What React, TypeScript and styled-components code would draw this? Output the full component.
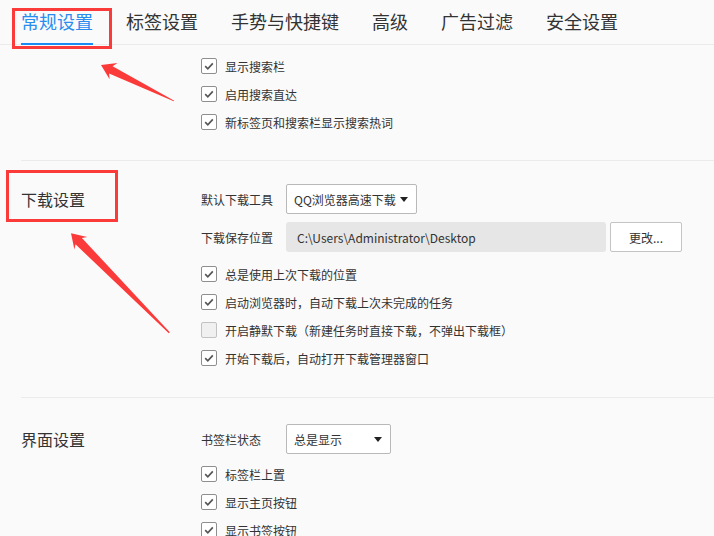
import React from 'react';
import styled, {createGlobalStyle} from 'styled-components';

const GlobalStyle = createGlobalStyle`
  html, body {
    margin: 0;
    padding: 0;
    background: #fafafa;
  }
  body {
    font-family: "Noto Sans CJK SC", "Noto Sans", sans-serif;
    color: #333;
  }
`;

const Page = styled.div`
  position: relative;
  width: 714px;
  height: 536px;
  overflow: hidden;
  background: #fafafa;
`;

const TabBar = styled.div`
  display: flex;
  gap: 33px;
  height: 44px;
  padding-left: 21px;
  border-bottom: 1px solid #ebebeb;
`;

const Tab = styled.div<{ $active?: boolean }>`
  position: relative;
  font-size: 18px;
  line-height: 43px;
  color: ${p => (p.$active ? '#2b8cf0' : '#333')};
  &::after {
    content: '';
    display: ${p => (p.$active ? 'block' : 'none')};
    position: absolute;
    left: 0;
    right: 0;
    bottom: -1px;
    height: 2px;
    background: #1a8bf5;
  }
`;

const Section = styled.section<{ $top: number; $bottom: number; $line?: boolean }>`
  display: flex;
  margin-left: 21px;
  padding-top: ${p => p.$top}px;
  padding-bottom: ${p => p.$bottom}px;
  border-top: ${p => (p.$line ? '1px solid #ebebeb' : 'none')};
`;

const Title = styled.div`
  width: 180px;
  flex: none;
  font-size: 16px;
  line-height: 30px;
  color: #333;
`;

const Body = styled.div`
  display: flex;
  flex-direction: column;
`;

const FieldRow = styled.div<{ $gap?: number }>`
  display: flex;
  align-items: center;
  height: 30px;
  margin-top: ${p => p.$gap ?? 0}px;
`;

const Label = styled.span`
  width: 85px;
  flex: none;
  font-size: 12px;
  color: #333;
`;

const Select = styled.div<{ $width: number }>`
  box-sizing: border-box;
  display: flex;
  align-items: center;
  justify-content: space-between;
  width: ${p => p.$width}px;
  height: 30px;
  padding: 0 8px 0 7px;
  background: #fff;
  border: 1px solid #b9b9b9;
  border-radius: 2px;
  font-size: 12px;
  color: #333;
`;

const Caret = styled.span`
  width: 0;
  height: 0;
  border-left: 4.5px solid transparent;
  border-right: 4.5px solid transparent;
  border-top: 5px solid #222;
`;

const PathField = styled.div`
  box-sizing: border-box;
  display: flex;
  align-items: center;
  width: 320px;
  height: 30px;
  padding-left: 11px;
  background: #e6e6e6;
  border-radius: 3px;
  font-size: 12px;
  color: #333;
`;

const Button = styled.button`
  box-sizing: border-box;
  width: 72px;
  height: 30px;
  margin-left: 4px;
  background: #fff;
  border: 1px solid #c4c4c4;
  border-radius: 2px;
  font-family: inherit;
  font-size: 12px;
  color: #333;
  padding: 0;
`;

const CheckList = styled.div<{ $gap: number }>`
  display: flex;
  flex-direction: column;
  margin-top: ${p => p.$gap}px;
`;

const CheckRow = styled.label`
  display: flex;
  align-items: center;
  gap: 8px;
  height: 28px;
  font-size: 12px;
  color: #333;
`;

const Box = styled.span<{ $on: boolean }>`
  box-sizing: border-box;
  display: flex;
  align-items: center;
  justify-content: center;
  width: 16px;
  height: 16px;
  border: 1px solid ${p => (p.$on ? '#8f8f8f' : '#c2c2c2')};
  border-radius: 2px;
  background: ${p => (p.$on ? '#fff' : '#f0f0f0')};
`;

const Mark = styled.div<{ $x: number; $y: number; $w: number; $h: number }>`
  position: absolute;
  left: ${p => p.$x}px;
  top: ${p => p.$y}px;
  width: ${p => p.$w}px;
  height: ${p => p.$h}px;
  box-sizing: border-box;
  border: 3px solid #fb3a3a;
  pointer-events: none;
`;

const Arrows = styled.svg`
  position: absolute;
  left: 0;
  top: 0;
  pointer-events: none;
`;

function Check({on, children}: { on: boolean; children: React.ReactNode }) {
  return (
    <CheckRow>
      <Box $on={on}>
        {on && (
          <svg width="12" height="12" viewBox="0 0 12 12">
            <polyline points="2.2,6.2 4.8,8.8 9.8,3.4" fill="none" stroke="#555" strokeWidth="1.7"/>
          </svg>
        )}
      </Box>
      <span>{children}</span>
    </CheckRow>
  );
}

const tabs = ['常规设置', '标签设置', '手势与快捷键', '高级', '广告过滤', '安全设置'];

export default function App() {
  return (
    <Page>
      <GlobalStyle/>
      <TabBar>
        {tabs.map((t, i) => <Tab key={t} $active={i === 0}>{t}</Tab>)}
      </TabBar>

      <Section $top={7} $bottom={24}>
        <Title/>
        <Body>
          <Check on>显示搜索栏</Check>
          <Check on>启用搜索直达</Check>
          <Check on>新标签页和搜索栏显示搜索热词</Check>
        </Body>
      </Section>

      <Section $line $top={23} $bottom={25}>
        <Title>下载设置</Title>
        <Body>
          <FieldRow>
            <Label>默认下载工具</Label>
            <Select $width={131}>
              <span>QQ浏览器高速下载</span>
              <Caret/>
            </Select>
          </FieldRow>
          <FieldRow $gap={8}>
            <Label>下载保存位置</Label>
            <PathField>C:\Users\Administrator\Desktop</PathField>
            <Button>更改...</Button>
          </FieldRow>
          <CheckList $gap={8}>
            <Check on>总是使用上次下载的位置</Check>
            <Check on>启动浏览器时，自动下载上次未完成的任务</Check>
            <Check on={false}>开启静默下载（新建任务时直接下载，不弹出下载框）</Check>
            <Check on>开始下载后，自动打开下载管理器窗口</Check>
          </CheckList>
        </Body>
      </Section>

      <Section $line $top={26} $bottom={20}>
        <Title>界面设置</Title>
        <Body>
          <FieldRow>
            <Label>书签栏状态</Label>
            <Select $width={105}>
              <span>总是显示</span>
              <Caret/>
            </Select>
          </FieldRow>
          <CheckList $gap={6}>
            <Check on>标签栏上置</Check>
            <Check on>显示主页按钮</Check>
            <Check on>显示书签按钮</Check>
          </CheckList>
        </Body>
      </Section>

      <Mark $x={12} $y={8} $w={100} $h={41}/>
      <Mark $x={6} $y={170} $w={112} $h={52}/>
      <Arrows width="714" height="536">
        <polygon
          fill="#fb3a3a"
          points="101,65 117.5,63.1 112.6,66.3 174.3,100.7 173.7,101.3 109.1,73.5 109.6,79.3"
        />
        <polygon
          fill="#fb3a3a"
          points="71,233.3 87.2,236.9 81.9,238 169.8,332.2 168.8,333.2 75.5,244.3 74.4,249.6"
        />
      </Arrows>
    </Page>
  );
}
